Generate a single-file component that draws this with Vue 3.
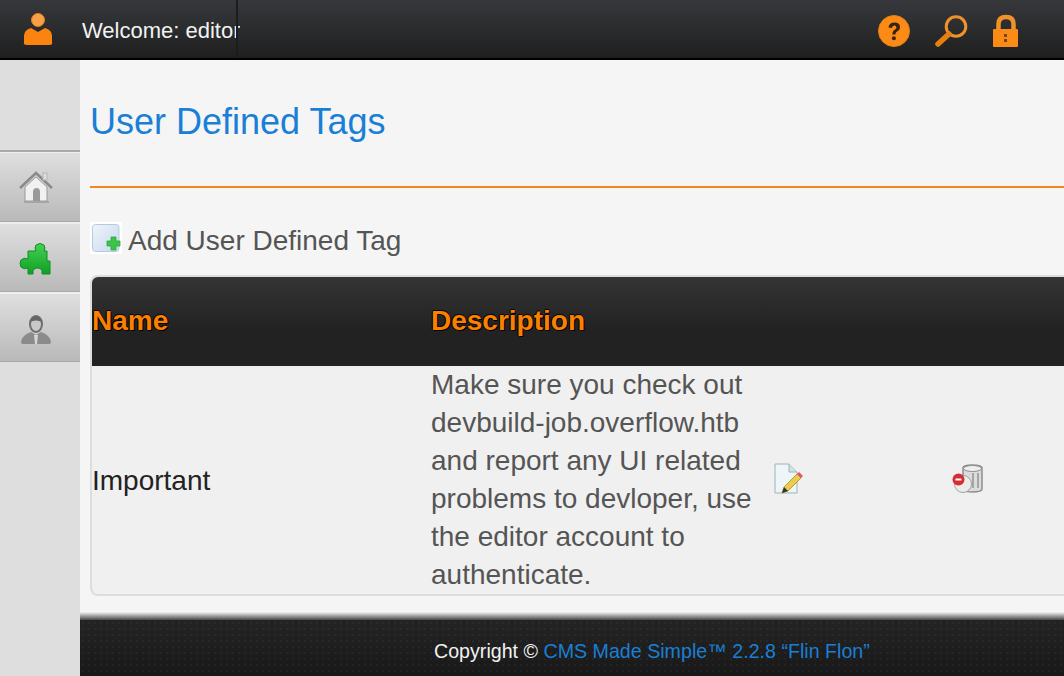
<template>
  <div class="page">
    <header class="topbar">
      <svg class="user-icon" width="34" height="36" viewBox="0 0 34 36">
        <circle cx="17" cy="9" r="6.5" fill="#f7a14a" stroke="#e9800f" />
        <path d="M3 31 Q2 34 6 34 H28 Q32 34 31 31 L31 25 Q31 19 24 17 L17 21 L10 17 Q3 19 3 25 Z" fill="#fb8410" />
      </svg>
      <div class="welcome">Welcome: editor</div>
      <div class="top-actions">
        <svg width="36" height="36" viewBox="0 0 36 36">
          <circle cx="17" cy="17" r="15.5" fill="#fb8a16" stroke="#e57f10" />
          <path d="M11.5 13.500 Q12 8.500 17.500 8.500 Q23 8.500 23 13 Q23 16 20 17.500 Q18.400 18.500 18.400 20.500 H15.400 Q15.300 17 18 15.500 Q19.600 14.500 19.400 13 Q19 11.300 17.200 11.500 Q15 11.600 15 14 Z" fill="#3a2408" />
          <circle cx="16.900" cy="24.300" r="2" fill="#3a2408" />
        </svg>
        <svg width="36" height="36" viewBox="0 0 36 36">
          <circle cx="22" cy="12.500" r="9.800" fill="none" stroke="#f0912a" stroke-width="3" />
          <path d="M15 20 L4 30" stroke="#e57f10" stroke-width="5.500" stroke-linecap="round" />
        </svg>
        <svg width="30" height="36" viewBox="0 0 30 36">
          <path d="M7.500 17 V10 Q7.500 3 15 3 Q22.500 3 22.500 10 V17" fill="none" stroke="#f0912a" stroke-width="4.500" />
          <rect x="2" y="15" width="25" height="18" rx="1" fill="#fb8a16" />
          <rect x="13" y="20" width="3" height="3" fill="#7a4410" />
          <rect x="13" y="25" width="3" height="3" fill="#7a4410" />
        </svg>
      </div>
    </header>

    <div class="body-row">
      <nav class="sidebar">
        <div class="nav-item">
          <svg width="36" height="36" viewBox="0 0 36 36">
            <path d="M7 17 V31 H29 V17 L18 7 Z" fill="#f1f1f1" stroke="#9a9a9a" />
            <path d="M2 18 L18 3 L34 18" fill="none" stroke="#8a8a8a" stroke-width="2.500" />
            <rect x="25" y="3" width="4" height="7" fill="#ddd" stroke="#b5b5b5" />
            <path d="M15 31 V22 Q15 18 18.500 18 Q22 18 22 22 V31 Z" fill="#9a9a9a" />
            <rect x="6" y="31" width="25" height="2" fill="#a5a5a5" />
          </svg>
        </div>
        <div class="nav-item">
          <svg width="36" height="36" viewBox="0 0 36 36">
            <defs>
              <linearGradient id="puzzleFill" x1="0" y1="0" x2="0" y2="1">
                <stop offset="0" stop-color="#45d056" />
                <stop offset="1" stop-color="#0fa024" />
              </linearGradient>
            </defs>
            <path d="M10 10 H18 Q16 7 18 4 Q22 1 26 4 Q28 7 26 10 H29 V20 H32 V33 H24 V29 Q20 25 15 29 V33 H10 V27 Q6 29 3 26 Q1 22 3 19 Q6 16 10 18 Z" fill="url(#puzzleFill)" stroke="#0e8f20" />
          </svg>
        </div>
        <div class="nav-item">
          <svg width="36" height="36" viewBox="0 0 36 36">
            <path d="M3 31 Q4 24 13 21 L18 24 L23 21 Q32 24 33 31 Q33 33 30 33 H6 Q3 33 3 31 Z" fill="#8b8b8b" />
            <ellipse cx="18" cy="13" rx="6" ry="8" fill="#c8c8c8" stroke="#6f6f6f" stroke-width="2" />
            <path d="M12 11 Q13 5 18 5 Q23 5 24 11 Q18 8 12 11 Z" fill="#666" />
            <path d="M16 24 H20 L19 33 H17 Z" fill="#d6d6d6" />
          </svg>
        </div>
      </nav>

      <main class="main">
        <div class="content">
          <h1 class="title">User Defined Tags</h1>
          <hr class="rule" />
          <div class="add-row">
            <svg class="add-icon" width="32" height="32" viewBox="0 0 32 32">
              <rect x="0" y="0" width="32" height="32" fill="#fff" />
              <defs>
                <linearGradient id="addFill" x1="0" y1="0" x2="1" y2="1">
                  <stop offset="0" stop-color="#f0f4fa" />
                  <stop offset="1" stop-color="#c6d9ee" />
                </linearGradient>
              </defs>
              <rect x="2.500" y="2.500" width="26.500" height="27" rx="3" fill="url(#addFill)" stroke="#b4cbe4" />
              <path d="M21 15 H26 V19 H30 V24 H26 V28 H21 V24 H17 V19 H21 Z" fill="#3fc24c" stroke="#2aa838" stroke-width="0.800" />
            </svg>
            <span class="add-label">Add User Defined Tag</span>
          </div>

          <table class="tags">
            <colgroup>
              <col style="width: 339px" />
              <col style="width: 341px" />
              <col style="width: 180px" />
              <col style="width: 180px" />
            </colgroup>
            <thead>
              <tr>
                <th>Name</th>
                <th>Description</th>
                <th></th>
                <th></th>
              </tr>
            </thead>
            <tbody>
              <tr v-for="tag in tags" :key="tag.name">
                <td class="name">{{ tag.name }}</td>
                <td class="desc">{{ tag.description }}</td>
                <td class="icon-cell">
                  <svg width="32" height="32" viewBox="0 0 32 32">
                    <path d="M3 1 H17 L25 9 V30 H3 Z" fill="#edf5f6" stroke="#9db4b8" />
                    <path d="M17 1 V9 H25" fill="#d0e2e4" stroke="#9db4b8" />
                    <path d="M10 30 L12 24 L25 11 L29 15 L16 28 Z" fill="#eccb4e" stroke="#a98c2a" stroke-width="0.800" />
                    <path d="M25 11 L27 9 L31 13 L29 15 Z" fill="#e0556a" />
                    <path d="M10 30 L12 24 L16 28 Z" fill="#333" />
                  </svg>
                </td>
                <td class="icon-cell">
                  <svg width="32" height="32" viewBox="0 0 32 32">
                    <path d="M11 5 Q11 2 20 2 Q30 2 30 5 V26 Q30 29 20 29 Q14 29 11 27 Z" fill="#dcdcdc" stroke="#8d8d8d" stroke-width="1.500" />
                    <ellipse cx="20.500" cy="5.500" rx="9" ry="3" fill="#efefef" stroke="#8d8d8d" />
                    <path d="M21 10 V25 M26 10 V25" stroke="#a5a5a5" stroke-width="2" />
                    <circle cx="11" cy="21" r="8.500" fill="#ececec" stroke="#a0a0a0" />
                    <circle cx="6.500" cy="16.500" r="6" fill="#d62c34" />
                    <rect x="3.500" y="15.500" width="6" height="2" fill="#fff" />
                  </svg>
                </td>
              </tr>
            </tbody>
          </table>
        </div>

        <footer class="footer">
          <span>Copyright © <a class="cms">CMS Made Simple™ 2.2.8 “Flin Flon”</a></span>
        </footer>
      </main>
    </div>
  </div>
</template>

<script setup>
import { ref } from 'vue'

const tags = ref([
  {
    name: 'Important',
    description:
      'Make sure you check out devbuild-job.overflow.htb and report any UI related problems to devloper, use the editor account to authenticate.'
  }
])
</script>

<style>
html,
body {
  margin: 0;
  overflow: hidden;
}
</style>

<style scoped>
.page {
  width: 1064px;
  height: 676px;
  display: flex;
  flex-direction: column;
  overflow: hidden;
  font-family: "Liberation Sans", Arial, sans-serif;
  background: #f5f5f5;
}

.topbar {
  height: 58px;
  flex: none;
  display: flex;
  align-items: center;
  background: linear-gradient(#36383c, #1f1f1f);
  border-bottom: 2px solid #000;
}

.user-icon {
  margin-left: 21px;
  margin-top: -1px;
  flex: none;
  filter: blur(0.6px);
}

.welcome {
  position: relative;
  margin-left: 27px;
  width: 158px;
  height: 58px;
  line-height: 62px;
  font-size: 22px;
  color: #f2f2f2;
  white-space: nowrap;
  overflow: hidden;
  flex: none;
}

.welcome::after {
  content: "";
  position: absolute;
  top: 0;
  bottom: 0;
  right: 2px;
  width: 2px;
  background: #1c1c1c;
}

.top-actions {
  margin-left: auto;
  margin-right: 43px;
  margin-top: 5px;
  display: flex;
  align-items: center;
  gap: 21px;
}

.top-actions svg {
  filter: blur(0.5px);
}

.body-row {
  flex: 1;
  display: flex;
  min-height: 0;
}

.sidebar {
  width: 80px;
  flex: none;
  box-sizing: border-box;
  padding-top: 90px;
  background: #dedede;
}

.nav-item {
  height: 70px;
  box-sizing: border-box;
  display: flex;
  align-items: center;
  justify-content: center;
  border-top: 2px solid #eee;
  border-bottom: 1px solid #aaa;
  background: linear-gradient(#dfdfdf, #b9b9b9);
}

.nav-item:first-child {
  height: 72px;
  border-top: 2px solid #aaa;
  box-shadow: inset 0 1px 0 #eee;
}

.nav-item svg {
  filter: blur(0.6px);
  margin-left: -8px;
  margin-top: 3px;
}

.main {
  flex: 1;
  min-width: 0;
  display: flex;
  flex-direction: column;
}

.content {
  flex: 1;
  min-height: 0;
  padding-left: 10px;
  overflow: hidden;
}

.title {
  margin: 42px 0 0;
  font-size: 36px;
  line-height: 40px;
  font-weight: normal;
  color: #1a7fd6;
}

.rule {
  margin: 44px 0 0;
  border: 0;
  height: 2px;
  background: #f18a1c;
}

.add-row {
  margin-top: 34px;
  height: 34px;
  display: flex;
  align-items: flex-start;
  font-size: 28px;
  color: #555;
  white-space: nowrap;
}

.add-label {
  line-height: 34px;
  margin-top: 2px;
}

.add-icon {
  margin-right: 6px;
  flex: none;
  filter: blur(0.4px);
}

.tags {
  margin-top: 19px;
  width: 1040px;
  table-layout: fixed;
  border-collapse: separate;
  border-spacing: 0;
  border: 2px solid #ddd;
  border-radius: 8px;
  overflow: hidden;
  font-size: 28px;
  background: #f0f0f0;
}

.tags th {
  height: 89px;
  padding: 0 0 2px;
  box-sizing: border-box;
  text-align: left;
  font-weight: bold;
  color: #fb8000;
  text-shadow: 1px 1px 0 #000, -1px 0 0 #000, 0 -1px 0 #000;
  background: linear-gradient(#343434, #222 60%);
}

.tags td {
  padding: 0;
  line-height: 38px;
  vertical-align: middle;
}

.name {
  color: #222;
}

.tags td.name {
  padding-top: 2px;
}

.desc {
  color: #555;
}

.icon-cell svg {
  display: block;
  margin-top: -3px;
  filter: blur(0.6px);
}

.footer {
  height: 56px;
  flex: none;
  position: relative;
  box-sizing: border-box;
  display: flex;
  align-items: center;
  padding: 6px 0 0 354px;
  font-size: 19.65px;
  color: #f2f2f2;
  white-space: nowrap;
  background-color: #1d1d1d;
  background-image: radial-gradient(rgba(255, 255, 255, 0.035) 1px, transparent 1.5px), linear-gradient(#242424, #181818);
  background-size: 6px 6px, 100% 100%;
}

.footer::before {
  content: "";
  position: absolute;
  left: 0;
  right: 0;
  top: -8px;
  height: 8px;
  background: linear-gradient(rgba(40, 40, 40, 0), rgba(40, 40, 40, 0.85));
}

.cms {
  color: #1a7fd6;
}
</style>
